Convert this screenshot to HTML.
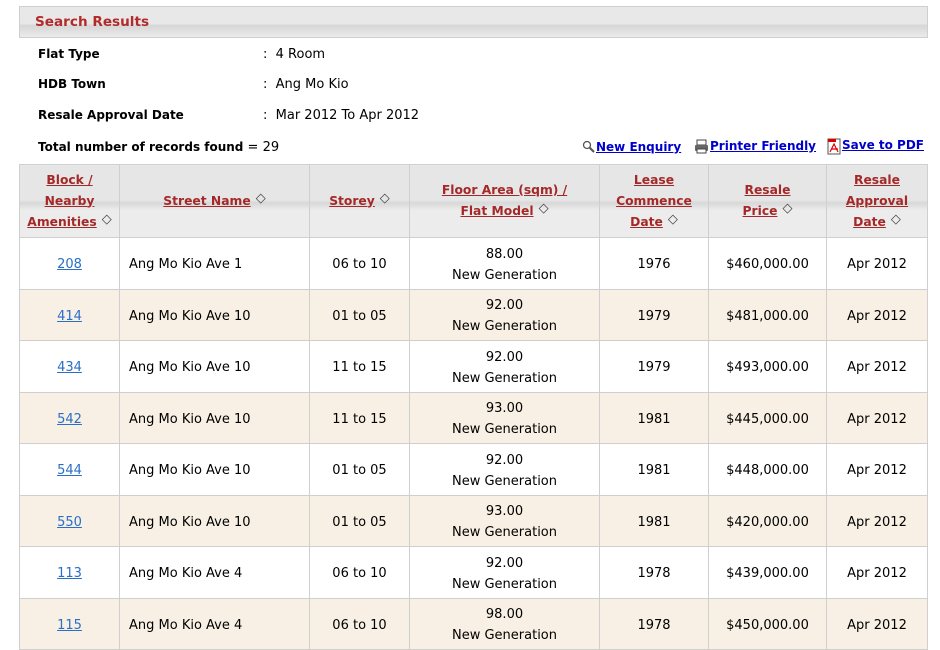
<!DOCTYPE html>
<html><head><meta charset="utf-8"><style>
body{margin:0;width:940px;height:624px;overflow:hidden;background:#fff;font-family:Verdana,"DejaVu Sans",sans-serif;font-size:13px;color:#000;position:relative}
.abs{position:absolute;white-space:nowrap}
.bar{left:19px;top:6px;width:907px;height:30px;border:1px solid #cfcfcf;background:linear-gradient(#e8e8e8 0,#e8e8e8 55%,#d6d6d6 62%,#ebebeb 100%)}
.bar span{position:absolute;left:15px;top:7px;color:#b22a2a;font-weight:bold;font-size:13.6px}
b{font-weight:bold;font-size:12px}
a{text-decoration:underline}
.lk{color:#0000cc;font-weight:bold;font-size:12px}
table{position:absolute;left:19px;top:164px;border-collapse:collapse;table-layout:fixed;width:909px}
td,th{border:1px solid #cfcfcf;text-align:center;padding:0;line-height:21px}
th{height:72px;background:linear-gradient(#e6e6e6 0,#e6e6e6 48%,#d8d8d8 52%,#ececec 62%,#ececec 100%);font-weight:bold;color:#a52828;font-size:12.3px}
th a{color:#a52828}
th i{font-style:normal;font-weight:normal;color:#444;font-size:13px;margin-left:5px;position:relative;top:-3px}
td{height:51.5px;padding-top:3px;box-sizing:border-box}
tr.b td{background:#f8f0e4}
td.l{text-align:left;padding-left:9px}
td a{color:#2a6fc7}
</style></head><body>
<div class="abs bar"><span>Search Results</span></div>
<div class="abs" style="left:38px;top:47px"><b>Flat Type</b></div>
<div class="abs" style="left:263px;top:47px">:&nbsp;&nbsp;4 Room</div>
<div class="abs" style="left:38px;top:77px"><b>HDB Town</b></div>
<div class="abs" style="left:263px;top:77px">:&nbsp;&nbsp;Ang Mo Kio</div>
<div class="abs" style="left:38px;top:108px"><b>Resale Approval Date</b></div>
<div class="abs" style="left:263px;top:108px">:&nbsp;&nbsp;Mar 2012 To Apr 2012</div>
<div class="abs" style="left:38px;top:140px"><b>Total number of records found</b> = 29</div>
<div class="abs" style="left:582px;top:140px">
<svg width="14" height="13" style="vertical-align:top"><circle cx="5" cy="5" r="3.5" fill="none" stroke="#555" stroke-width="1.3"/><line x1="7.5" y1="7.5" x2="12" y2="12" stroke="#555" stroke-width="2"/></svg><a class="lk">New Enquiry</a></div>
<div class="abs" style="left:694px;top:139px">
<svg width="16" height="15" style="vertical-align:top"><rect x="3" y="1" width="9" height="5" fill="#fff" stroke="#444"/><rect x="1" y="6" width="13" height="6" rx="1" fill="#666"/><rect x="3" y="10" width="9" height="4" fill="#fff" stroke="#444"/></svg><a class="lk">Printer Friendly</a></div>
<div class="abs" style="left:827px;top:138px">
<svg width="15" height="17" style="vertical-align:top"><rect x="1" y="1" width="12" height="15" fill="#fff" stroke="#555"/><rect x="1" y="1" width="8" height="3" fill="#d00"/><path d="M3 14 L7 6 L11 14 M4 11 H11" stroke="#d00" fill="none" stroke-width="1.2"/></svg><a class="lk">Save to PDF</a></div>
<table>
<colgroup><col style="width:100px"><col style="width:190px"><col style="width:100px"><col style="width:190px"><col style="width:109px"><col style="width:118px"><col style="width:101px"></colgroup>
<tr><th><a>Block /</a><br><a>Nearby</a><br><a>Amenities</a><i>◇</i></th><th><a>Street Name</a><i>◇</i></th><th><a>Storey</a><i>◇</i></th><th><a>Floor Area (sqm) /</a><br><a>Flat Model</a><i>◇</i></th><th><a>Lease</a><br><a>Commence</a><br><a>Date</a><i>◇</i></th><th><a>Resale</a><br><a>Price</a><i>◇</i></th><th><a>Resale</a><br><a>Approval</a><br><a>Date</a><i>◇</i></th></tr>
<tr><td><a>208</a></td><td class="l">Ang Mo Kio Ave 1</td><td>06 to 10</td><td>88.00<br>New Generation</td><td>1976</td><td>$460,000.00</td><td>Apr 2012</td></tr>
<tr class="b"><td><a>414</a></td><td class="l">Ang Mo Kio Ave 10</td><td>01 to 05</td><td>92.00<br>New Generation</td><td>1979</td><td>$481,000.00</td><td>Apr 2012</td></tr>
<tr><td><a>434</a></td><td class="l">Ang Mo Kio Ave 10</td><td>11 to 15</td><td>92.00<br>New Generation</td><td>1979</td><td>$493,000.00</td><td>Apr 2012</td></tr>
<tr class="b"><td><a>542</a></td><td class="l">Ang Mo Kio Ave 10</td><td>11 to 15</td><td>93.00<br>New Generation</td><td>1981</td><td>$445,000.00</td><td>Apr 2012</td></tr>
<tr><td><a>544</a></td><td class="l">Ang Mo Kio Ave 10</td><td>01 to 05</td><td>92.00<br>New Generation</td><td>1981</td><td>$448,000.00</td><td>Apr 2012</td></tr>
<tr class="b"><td><a>550</a></td><td class="l">Ang Mo Kio Ave 10</td><td>01 to 05</td><td>93.00<br>New Generation</td><td>1981</td><td>$420,000.00</td><td>Apr 2012</td></tr>
<tr><td><a>113</a></td><td class="l">Ang Mo Kio Ave 4</td><td>06 to 10</td><td>92.00<br>New Generation</td><td>1978</td><td>$439,000.00</td><td>Apr 2012</td></tr>
<tr class="b"><td><a>115</a></td><td class="l">Ang Mo Kio Ave 4</td><td>06 to 10</td><td>98.00<br>New Generation</td><td>1978</td><td>$450,000.00</td><td>Apr 2012</td></tr>
</table>
</body></html>
